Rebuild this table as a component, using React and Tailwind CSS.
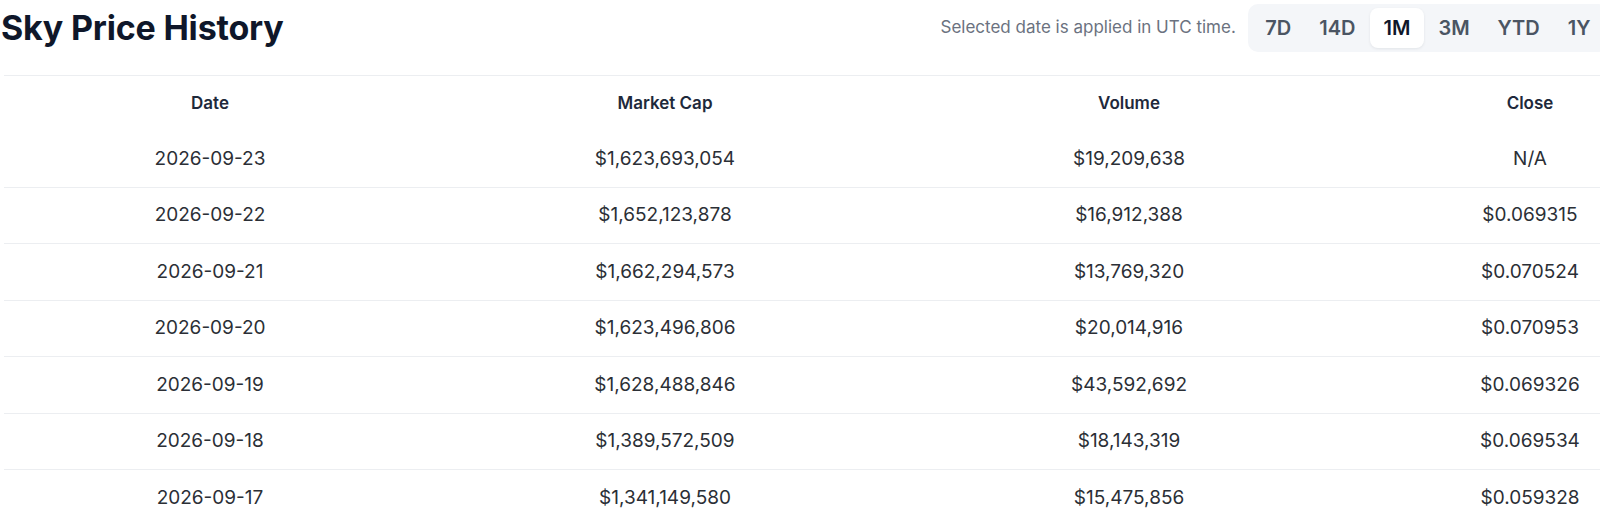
import React from "react";

const ranges = ["7D", "14D", "1M", "3M", "YTD", "1Y"];

const rows = [
  { date: "2026-09-23", cap: "$1,623,693,054", volume: "$19,209,638", close: "N/A" },
  { date: "2026-09-22", cap: "$1,652,123,878", volume: "$16,912,388", close: "$0.069315" },
  { date: "2026-09-21", cap: "$1,662,294,573", volume: "$13,769,320", close: "$0.070524" },
  { date: "2026-09-20", cap: "$1,623,496,806", volume: "$20,014,916", close: "$0.070953" },
  { date: "2026-09-19", cap: "$1,628,488,846", volume: "$43,592,692", close: "$0.069326" },
  { date: "2026-09-18", cap: "$1,389,572,509", volume: "$18,143,319", close: "$0.069534" },
  { date: "2026-09-17", cap: "$1,341,149,580", volume: "$15,475,856", close: "$0.059328" },
];

const cols = "grid grid-cols-[412px_498px_430px_372px] items-center text-center";

export default function App() {
  return (
    <div className="h-[512px] w-full overflow-hidden bg-white font-['Inter','Liberation_Sans',sans-serif]">
      <div className="w-[1716px]">
        {/* title + range picker */}
        <div className="flex w-[1608px] items-center justify-between pt-1">
          <h1 className="ml-px text-[34px] font-bold leading-none tracking-[-0.2px] text-[#0f172a]">
            Sky Price History
          </h1>
          <div className="flex items-center gap-3">
            <span className="text-[17px] text-[#6b7280]">Selected date is applied in UTC time.</span>
            <div className="flex h-12 items-center gap-px rounded-[10px] bg-[#f4f6f9] p-1">
              {ranges.map((r) => (
                <button
                  key={r}
                  className={`h-10 rounded-lg px-[13.5px] text-[20px] font-semibold ${
                    r === "1M" ? "bg-white text-[#0f172a] shadow-[0_1px_3px_rgba(15,23,42,0.08)]" : "text-[#4b5563]"
                  }`}
                >
                  {r}
                </button>
              ))}
            </div>
          </div>
        </div>

        {/* table */}
        <div className="ml-1 mt-[23px] border-t border-[#eceef1]">
          <div className={`${cols} h-[55px] text-[17px] font-semibold text-[#1e293b]`}>
            <div>Date</div>
            <div>Market Cap</div>
            <div>Volume</div>
            <div>Close</div>
          </div>
          {rows.map((row) => (
            <div key={row.date} className={`${cols} h-[56.5px] border-b border-[#eceef1] text-[19px] text-[#2b2f36]`}>
              <div>{row.date}</div>
              <div>{row.cap}</div>
              <div>{row.volume}</div>
              <div>{row.close}</div>
            </div>
          ))}
        </div>
      </div>
    </div>
  );
}
